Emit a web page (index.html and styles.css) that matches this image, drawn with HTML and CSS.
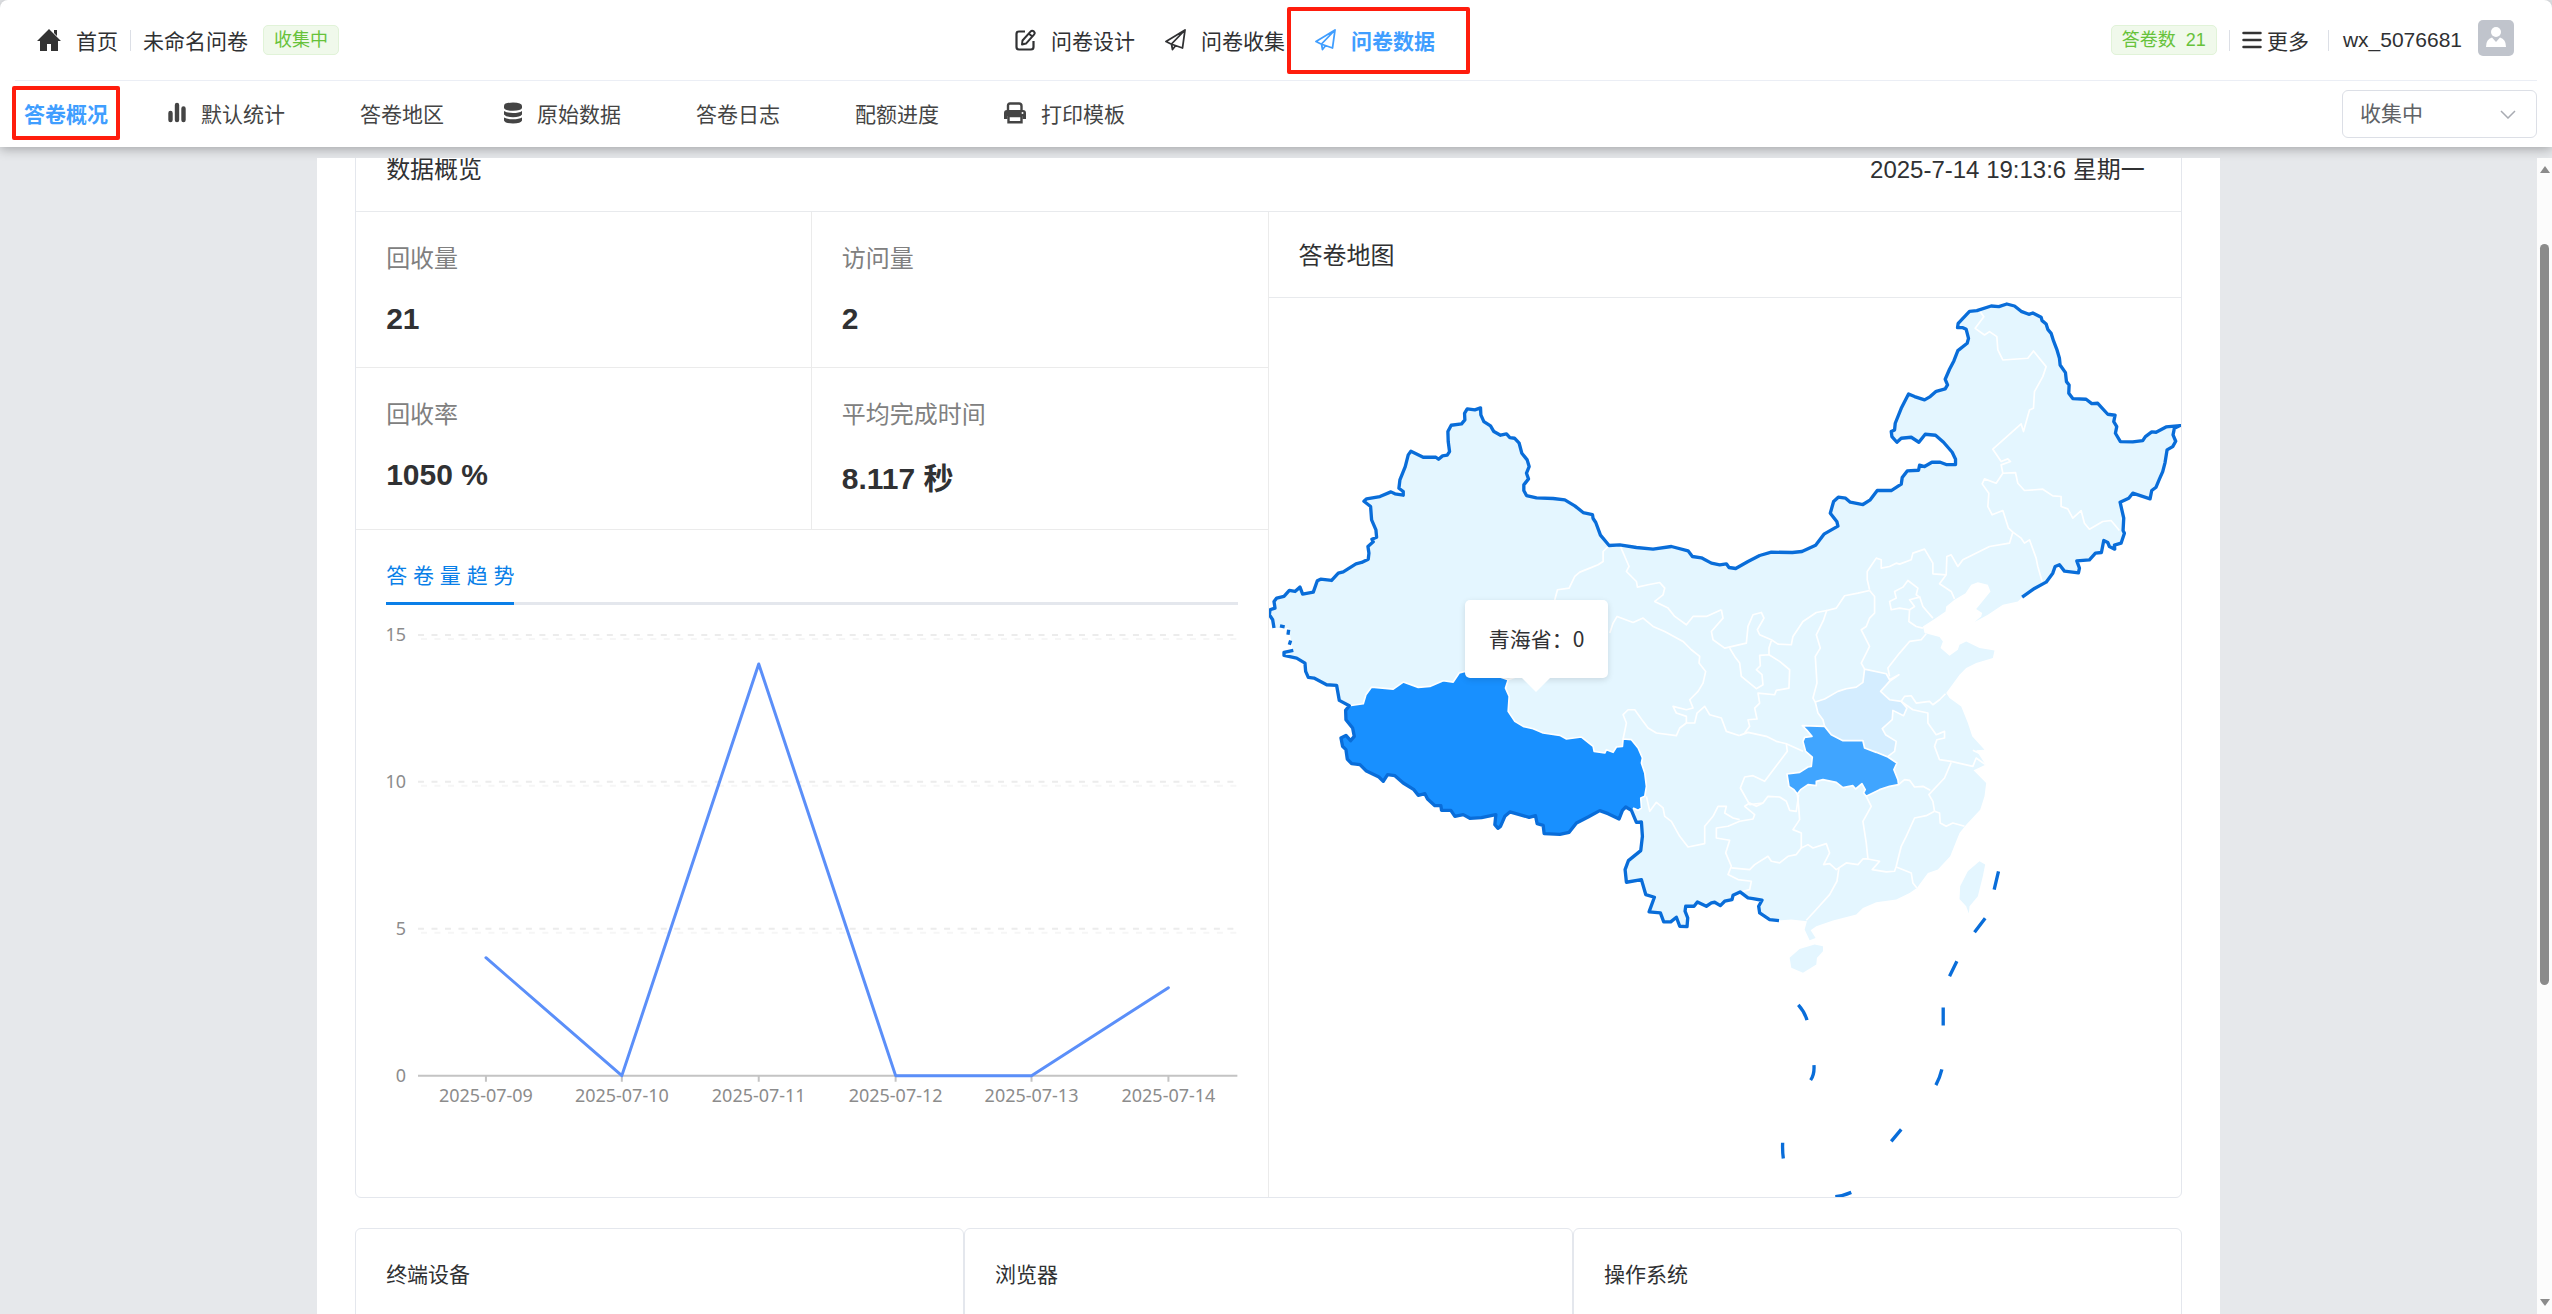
FILE: index.html
```
<!DOCTYPE html>
<html lang="zh-CN">
<head>
    <meta charset="UTF-8">
    <meta name="viewport" content="width=device-width, initial-scale=1.0">
    <title>问卷数据 - 答卷概况</title>
    <link rel="stylesheet" href="styles.css">
</head>
<body>
    <header class="header">
        <div class="top-bar">
            <div class="top-group">
                <a class="home-link" href="#">
                    <svg class="icon-home" viewBox="0 0 24 22"><path d="M12 0 L24 12 H21 V22 H14 V15 H10 V22 H3 V12 H0 Z M17 1 H20 V7 L17 4 Z" fill="#333"/></svg>
                    首页
                </a>
                <span class="divider"></span>
                <span class="survey-name">未命名问卷</span>
                <span class="tag">收集中</span>
            </div>
            <nav class="main-nav">
                <a class="nav-item" href="#">
                    <svg class="icon-nav" viewBox="0 0 21 22"><path d="M10 2.5 H4 Q1.5 2.5 1.5 5 V18 Q1.5 20.5 4 20.5 H16 Q18.500 20.500 18.500 18 V12" fill="none" stroke="currentColor" stroke-width="2.200"/><path d="M7.500 11.500 L15.500 2.600 Q17 1 18.800 2.400 Q20.500 4 19 5.700 L11 14.600 L7 15.500 Z M13.800 4.600 L17.200 7.600" fill="none" stroke="currentColor" stroke-width="2" stroke-linejoin="round"/></svg>
                    问卷设计
                </a>
                <a class="nav-item" href="#">
                    <svg class="icon-nav" viewBox="0 0 21 22"><path d="M20 1 L1 12.500 L6 15 L17.500 19 Z M20 1 L6.500 15 L7.500 20.500 L10.500 16.800" fill="none" stroke="currentColor" stroke-width="1.800" stroke-linejoin="round"/></svg>
                    问卷收集
                </a>
                <a class="nav-item active" href="#">
                    <svg class="icon-nav" viewBox="0 0 21 22"><path d="M20 1 L1 12.500 L6 15 L17.500 19 Z M20 1 L6.500 15 L7.500 20.500 L10.500 16.800" fill="none" stroke="currentColor" stroke-width="1.800" stroke-linejoin="round"/></svg>
                    问卷数据
                </a>
            </nav>
            <div class="top-group">
                <span class="tag tag-count">答卷数 <span>21</span></span>
                <span class="divider"></span>
                <button class="more-button" type="button">
                    <svg class="icon-more" viewBox="0 0 19 18"><path d="M1 2 H18 M1 9 H18 M1 16 H18" stroke="#333" stroke-width="2.500" stroke-linecap="round"/></svg>
                    更多
                </button>
                <span class="divider divider-user"></span>
                <span class="user-name">wx_5076681</span>
                <svg class="avatar" viewBox="0 0 36 36"><rect width="36" height="36" rx="5" fill="#c0c4cc"/><circle cx="18" cy="12" r="5" fill="#fff"/><path d="M8 27 Q8 19 14 17.500 L18 22 L22 17.500 Q28 19 28 27 Z" fill="#fff"/></svg>
            </div>
        </div>
        <div class="tab-bar">
            <nav class="tabs">
                <a class="tab active" href="#">答卷概况</a>
                <a class="tab tab-icon" href="#">
                    <svg class="icon-tab" viewBox="0 0 18 22"><path d="M2.500 11 V18 M9 3 V18 M15.500 6.500 V18" stroke="#444" stroke-width="4.400" stroke-linecap="round"/></svg>
                    默认统计
                </a>
                <a class="tab" href="#">答卷地区</a>
                <a class="tab tab-icon" href="#">
                    <svg class="icon-tab" viewBox="0 0 18 22"><path d="M0 4 Q0 0.500 9 0.500 Q18 0.500 18 4 V6 Q17 8.800 9 8.800 Q1 8.800 0 6 Z M0 9 Q3 11 9 11 Q15 11 18 9 V12.500 Q16 15.200 9 15.200 Q2 15.200 0 12.500 Z M0 15.500 Q3 17.300 9 17.300 Q15 17.300 18 15.500 V18.500 Q17 21.500 9 21.500 Q1 21.500 0 18.500 Z" fill="#444"/></svg>
                    原始数据
                </a>
                <a class="tab" href="#">答卷日志</a>
                <a class="tab" href="#">配额进度</a>
                <a class="tab tab-icon" href="#">
                    <svg class="icon-print" viewBox="0 0 27 22"><path d="M9 8 V3.500 Q9 1.500 11 1.500 H20 Q22.500 1.500 22.500 4 V8" fill="none" stroke="#444" stroke-width="2.400"/><path d="M8 8 H24 Q27 8 27 11 V17 H23.500 V14 H8.500 V17 H5 V11 Q5 8 8 8 Z" fill="#444"/><path d="M9.500 14 H22.500 V20.300 H9.500 Z" fill="#fff" stroke="#444" stroke-width="2.400"/><circle cx="23.500" cy="11" r="1" fill="#fff"/></svg>
                    打印模板
                </a>
            </nav>
            <div class="status-select">
                <select aria-label="问卷状态">
                    <option>收集中</option>
                </select>
                <svg class="icon-arrow" viewBox="0 0 16 9"><path d="M1 1 L8 8 L15 1" fill="none" stroke="#a8abb2" stroke-width="1.500"/></svg>
            </div>
        </div>
    </header>

    <div class="viewport">
        <div class="scroll-area">
            <main class="page">
                <section class="card overview">
                    <div class="card-title overview-title">
                        <span>数据概览</span>
                        <span>2025-7-14 19:13:6 星期一</span>
                    </div>
                    <div class="overview-body">
                        <div class="overview-left">
                            <div class="stats">
                                <div class="stat">
                                    <p class="stat-label">回收量</p>
                                    <p class="stat-value">21</p>
                                </div>
                                <div class="stat">
                                    <p class="stat-label">访问量</p>
                                    <p class="stat-value">2</p>
                                </div>
                                <div class="stat">
                                    <p class="stat-label">回收率</p>
                                    <p class="stat-value">1050 %</p>
                                </div>
                                <div class="stat">
                                    <p class="stat-label">平均完成时间</p>
                                    <p class="stat-value stat-time">8.117 秒</p>
                                </div>
                            </div>
                            <div class="trend">
                                <div class="trend-tabs"><button class="trend-tab" type="button">答 卷 量 趋 势</button></div>
                                <svg class="trend-chart" viewBox="386 605 852 520">
                                    <g class="grid-line">
                                        <path d="M418 635 H1238 M418 782 H1238 M418 929 H1238"/>
                                        <path class="grid-shadow" d="M421 639 H1238 M421 786 H1238 M421 933 H1238"/>
                                    </g>
                                    <path class="axis" d="M418 1076 H1238 M486 1076 V1082 M622 1076 V1082 M759 1076 V1082 M896 1076 V1082 M1032 1076 V1082 M1169 1076 V1082"/>
                                    <polyline class="trend-line" points="486,958 622,1076 759,664 896,1076 1032,1076 1169,988"/>
                                    <g class="axis-text" text-anchor="end">
                                        <text x="406" y="641">15</text>
                                        <text x="406" y="788">10</text>
                                        <text x="406" y="935">5</text>
                                        <text x="406" y="1082">0</text>
                                    </g>
                                    <g class="axis-text" text-anchor="middle">
                                        <text x="486" y="1102">2025-07-09</text>
                                        <text x="622" y="1102">2025-07-10</text>
                                        <text x="759" y="1102">2025-07-11</text>
                                        <text x="896" y="1102">2025-07-12</text>
                                        <text x="1032" y="1102">2025-07-13</text>
                                        <text x="1169" y="1102">2025-07-14</text>
                                    </g>
                                </svg>
                            </div>
                        </div>
                        <div class="overview-right">
                            <div class="card-title">答卷地图</div>
                            <div class="map">
                                <svg class="map-svg" viewBox="27 54 2739 2700">
                                    <!-- 底图 -->
                                    <path class="land" d="M42 1045 38 1020 28 1005 30 990 45 985 42 965 50 955 72 950 88 932 105 935 120 922 128 943 160 937 172 903 182 898 215 902 235 880 250 876 288 852 305 848 325 838 327 820 324 800 340 786 336 778 350 772 348 750 335 720 332 680 312 664 320 657 360 650 393 636 405 642 430 646 430 635 417 625 420 600 436 560 445 525 453 514 490 532 528 532 536 538 548 528 562 526 569 515 565 485 564 455 574 436 605 432 615 420 614 400 622 387 645 390 662 384 663 405 672 425 692 438 702 455 722 466 740 462 750 473 764 475 778 490 786 520 802 540 808 560 800 580 806 597 792 615 792 632 800 647 830 654 880 656 915 660 945 678 970 698 998 704 1000 716 1008 728 1022 766 1048 797 1080 795 1130 803 1180 808 1235 800 1285 813 1298 830 1325 834 1355 850 1380 855 1400 852 1408 863 1428 866 1465 845 1500 827 1535 817 1598 818 1627 815 1668 796 1693 763 1735 739 1732 726 1712 700 1722 665 1736 652 1758 655 1772 667 1810 674 1832 660 1853 632 1895 632 1925 613 1928 593 1943 573 1977 571 1980 556 1995 560 2017 547 2042 547 2060 554 2088 554 2088 538 2078 517 2052 487 2028 466 1997 463 1978 487 1955 472 1925 475 1912 487 1897 470 1895 455 1905 450 1907 430 1925 385 1947 342 1965 350 1995 360 2012 350 2030 334 2057 327 2064 315 2057 298 2070 268 2083 243 2095 212 2123 190 2127 175 2120 148 2110 143 2094 143 2096 130 2130 94 2152 92 2195 78 2218 80 2242 72 2265 78 2285 94 2308 103 2320 99 2345 112 2348 122 2360 132 2365 148 2375 160 2382 182 2392 208 2400 235 2402 255 2418 278 2421 305 2429 315 2428 340 2440 356 2480 358 2497 371 2515 370 2545 403 2567 406 2563 425 2572 440 2568 460 2583 485 2620 486 2650 482 2658 470 2677 456 2690 457 2720 441 2762 437 2745 445 2741 465 2749 484 2740 500 2723 510 2717 548 2710 575 2700 598 2690 622 2677 632 2672 657 2620 640 2608 655 2582 667 2593 715 2591 752 2595 760 2585 790 2565 796 2566 808 2550 800 2545 788 2533 782 2526 818 2508 820 2490 840 2452 843 2460 865 2457 879 2415 874 2400 855 2387 860 2380 880 2360 907 2325 926 2288 952
                                        2275 965 2230 975 2185 1005 2145 1027 2165 1010 2168 1000 2150 988 2165 970 2193 935 2185 915 2155 907 2135 915 2118 940 2085 960 2060 980 2058 995 2025 1018 1990 1040 1995 1060 2040 1072 2050 1085 2043 1105 2070 1128 2095 1110 2100 1095 2120 1085 2160 1105 2205 1112 2200 1135 2150 1150 2120 1165 2100 1185 2060 1240 2070 1255 2105 1280 2125 1330 2138 1370 2175 1410 2150 1412 2178 1455 2142 1472 2180 1510 2175 1550 2162 1590 2120 1635 2100 1660 2090 1685 2072 1730 2035 1770 2005 1780 1972 1825 1950 1840 1910 1860 1850 1868 1810 1885 1790 1905 1720 1923 1670 1940 1653 1952 1668 1975 1650 1982 1635 1950 1642 1925 1595 1920
                                        1555 1923 1530 1920 1500 1900 1497 1880 1507 1862 1480 1857 1465 1855 1441 1837 1420 1847 1417 1860 1395 1865 1382 1878 1365 1868 1355 1870 1340 1880 1313 1867 1303 1880 1278 1880 1276 1895 1284 1915 1282 1941 1260 1940 1250 1913 1233 1927 1212 1927 1202 1900 1168 1897 1184 1853 1158 1845 1145 1800 1100 1808 1096 1770 1106 1743 1143 1713 1148 1670 1145 1627 1130 1628 1115 1592 1098 1582 1088 1592 1078 1618 1045 1602 1020 1593 985 1612 950 1630 928 1658 900 1664 853 1662 850 1637 832 1632 827 1608 808 1613 750 1597 735 1610 722 1640 714 1646 705 1635 708 1605 665 1614 630 1616 610 1605 585 1610 573 1592 545 1592 543 1578 525 1578 503 1558 495 1542 475 1547 462 1530 430 1510 405 1488 383 1485 370 1505 357 1492 318 1473 300 1455 275 1452 262 1438 258 1410 248 1400 243 1375 258 1367 272 1383 283 1370 278 1345 258 1320 257 1292 268 1278 238 1262 230 1217 200 1215 162 1195 145 1193 137 1175 135 1150 110 1135 72 1127 72 1118 100 1112 92 1075 85 1045Z"/>
                                    <path class="land" d="M2160 1745 2177 1755 2170 1790 2155 1850 2130 1880 2128 1902 2120 1880 2100 1858 2102 1820 2125 1775Z"/>
                                    <path class="land" d="M1620 2008 1665 1995 1690 2000 1690 2015 1672 2035 1670 2055 1630 2080 1595 2065 1590 2035Z"/>

                                    <!-- 西藏 -->
                                    <path fill="#1890ff" d="M268 1278 310 1272 318 1245 335 1222 400 1228 430 1207 475 1223 510 1220 550 1203 580 1207 598 1180 615 1175 700 1185 745 1200 737 1225 748 1250 745 1295 765 1325 790 1340 820 1347 850 1360 900 1367 920 1378 965 1372 1000 1400 1003 1415 1035 1420 1040 1410 1060 1418 1070 1402 1088 1400 1090 1378 1115 1380 1135 1405 1148 1435 1145 1450 1155 1480 1160 1520 1155 1550 1143 1555 1145 1585 1135 1592 1120 1585 1115 1592 1098 1582 1088 1592 1078 1618 1045 1602 1020 1593 985 1612 950 1630 928 1658 900 1664 853 1662 850 1637 832 1632 827 1608 808 1613 750 1597 735 1610 722 1640 714 1646 705 1635 708 1605 665 1614 630 1616 610 1605 585 1610 573 1592 545 1592 543 1578 525 1578 503 1558 495 1542 475 1547 462 1530 430 1510 405 1488 383 1485 370 1505 357 1492 318 1473 300 1455 275 1452 262 1438 258 1410 248 1400 243 1375 258 1367 272 1383 283 1370 278 1345 258 1320 257 1292Z"/>

                                    <!-- 河南、湖北 -->
                                    <g transform="translate(1320 840)">
                                        <path fill="#d4edff" d="M347 427 375 418 415 395 440 387 470 382 490 368 495 328 560 342 570 360 543 395 570 420 605 425 622 445 612 468 580 452 578 480 548 507 558 525 590 545 585 575 565 590 530 575 510 573 492 560 490 543 430 543 395 525 375 500 370 480 355 460Z"/>
                                        <path fill="#40a5ff" d="M308 498 375 500 395 525 430 543 490 543 495 565 530 578 565 592 592 610 583 630 595 660 597 675 570 680 540 690 500 710 492 700 497 690 487 672 468 688 460 678 430 684 410 668 370 660 350 665 350 678 325 675 303 690 293 703 283 690 268 680 262 643 300 638 325 622 335 620 338 592 318 575 310 545 315 533 337 530 322 512Z"/>
                                    </g>

                                    <!-- 省界 -->
                                    <g class="province">
                                        <path d="M268 1278 310 1272 318 1245 335 1222 400 1228 430 1207 475 1223 510 1220 550 1203 580 1207 598 1180 615 1175 700 1185 745 1200 737 1225 748 1250 745 1295 765 1325 790 1340 820 1347 850 1360 900 1367 920 1378 965 1372 1000 1400 1003 1415 1035 1420 1040 1410 1060 1418 1070 1402 1088 1400 1090 1378 1115 1380 1135 1405 1148 1435 1145 1450 1155 1480 1160 1520 1155 1550 1143 1555 1145 1585 1135 1592 1120 1585"/>
                                        <path d="M1048 797 1030 815 1030 845 1015 855 990 865 960 877 945 890 928 925 893 930 885 960 870 1000 800 1180 745 1200"/>
                                        <path d="M1080 795 1108 860 1100 875 1130 905 1133 922 1165 915 1200 908 1215 925 1210 945 1185 965 1225 985 1245 1010 1280 1035 1300 1010 1340 1010 1385 990"/>
                                        <path d="M1050 1060 1060 1030 1072 1010 1120 1028 1150 1015 1180 1040 1215 1055 1270 1085 1295 1110 1320 1130 1318 1150 1338 1175 1330 1210 1315 1235 1290 1260 1300 1285 1280 1290 1240 1280 1250 1300 1280 1310 1280 1330 1305 1330 1312 1300 1335 1280 1350 1305 1385 1315 1400 1355 1440 1368"/>
                                        <path d="M1280 1330 1260 1345 1250 1368 1190 1360 1165 1345 1150 1325 1125 1290 1105 1290 1090 1305 1100 1330 1090 1378"/>
                                        <path d="M1160 1550 1170 1595 1190 1568 1210 1585 1215 1610 1235 1625 1260 1670 1285 1702 1335 1692 1335 1640 1360 1610"/>
                                    </g>
                                    <g class="province" transform="translate(1320 840)">
                                        <path d="M382 150 372 180 350 225 362 265 347 290 352 370 340 415 347 427 375 418 415 395 440 387 470 382 490 368 495 328"/>
                                        <path d="M65 150 70 175 35 215 40 240 75 265 140 250 145 200 160 165 185 158 193 175 173 210 180 225 215 240 235 253 275 255 280 230 310 185 350 158 382 152 410 145 435 108 475 100 510 92"/>
                                        <path d="M90 265 105 290 120 310 125 350 170 387 190 375 187 345 170 330 182 318 180 287 208 285 240 305 270 330 268 385 230 392 225 405 175 400 180 430 165 445 172 478 145 480 150 500 135 520"/>
                                        <path d="M215 243 208 265 208 285"/>
                                        <path d="M120 527 145 518 200 530 230 545 260 552 310 575"/>
                                        <path d="M260 552 263 575 225 625 195 665 160 648 135 652 122 685 150 735 190 730 205 710 240 712 260 725 270 752 290 755 297 705"/>
                                        <path d="M190 730 170 740 150 730 135 740 165 765 160 778 120 785 85 800 50 805 50 835 90 842 78 880 95 920 85 945 115 960 155 965 150 990 120 998"/>
                                        <path d="M40 770 55 740 80 740 75 760 100 775 120 780"/>
                                        <path d="M95 925 150 930 165 915 205 890 215 905 240 910 265 890 290 885 305 865"/>
                                        <path d="M293 703 297 740 300 780 280 810 305 820 305 865 325 855 340 865 380 852 390 880 372 915 390 912 410 930 440 910 475 915 490 898 505 898"/>
                                        <path d="M418 925 412 965 390 1005 345 1055 320 1082"/>
                                        <path d="M500 710 515 740 490 785 500 850 505 898 540 905 518 930 560 937 585 935 590 920 605 860 620 830 645 775 680 768 705 755"/>
                                        <path d="M590 922 635 940 640 970 652 985"/>
                                        <path d="M705 755 700 725 688 705 735 655 755 608"/>
                                        <path d="M705 755 720 760 722 790 740 800 760 790 795 800"/>
                                        <path d="M597 675 615 660 630 662 645 682 670 680 692 692"/>
                                        <path d="M605 425 640 450 685 460 685 490 710 525 735 515 735 535 712 540 705 560 720 600 755 605 820 620 830 595 858 615"/>
                                        <path d="M820 572 858 590"/>
                                        <path d="M605 425 615 410 635 408 650 430 690 425 700 435 720 420 738 402"/>
                                        <path d="M570 350 565 325 600 280 630 245 665 240 680 222"/>
                                        <path d="M510 92 525 110 525 160 510 175 500 200 485 210 510 260 485 310 495 328 560 342 570 360 598 345 570 365 543 395 570 420 605 425 622 445 612 468 580 452 578 480 548 507 558 525 590 545 585 575 565 590"/>
                                        <path d="M308 498 375 500 395 525 430 543 490 543 495 565 530 578 565 592 592 610 583 630 595 660 597 675 570 680 540 690 500 710 492 700 497 690 487 672 468 688 460 678 430 684 410 668 370 660 350 665 350 678 325 675 303 690 293 703 283 690 268 680 262 643 300 638 325 622 335 620 338 592 318 575 310 545 315 533 337 530 322 512Z"/>
                                        <path d="M347 427 355 460 370 480 375 500"/>
                                        <path d="M625 62 655 85 650 105 660 112 630 120 645 140 630 150 600 145 575 150 570 125 590 115 585 95 610 82Z"/>
                                        <path d="M660 110 670 140 700 175"/>
                                        <path d="M630 150 628 185 650 200 670 205"/>
                                    </g>
                                    <g class="province" transform="translate(1380 0)">
                                        <path d="M450 930 443 900 443 875 470 835 485 840 485 865 510 860 530 850 540 853 575 840 580 820 615 808 640 850 640 882 680 885 660 912 695 935 705 957"/>
                                        <path d="M680 885 682 830 695 825 715 860 730 840 810 800 870 790 880 757 905 775 915 790 930 780 950 835 955 860 968 905"/>
                                        <path d="M880 757 867 745 850 692 818 705 805 680 808 640 788 612 795 597 830 610 850 580 888 578 895 610 915 632 970 628 1000 648 1025 650 1025 680 1045 687 1060 715 1085 692 1095 730 1110 748 1150 725 1175 722 1200 752"/>
                                        <path d="M850 580 845 555 873 545 865 537 845 545 820 508 905 432 912 455 930 390 942 385 945 335 970 290 980 260 942 213 925 235 850 240 835 210 832 170 810 155 795 165 767 145 793 110 780 92"/>
                                    </g>

                                    <!-- 国界 -->
                                    <path class="border" d="M42 1045 38 1020 28 1005 30 990 45 985 42 965 50 955 72 950 88 932 105 935 120 922 128 943 160 937 172 903 182 898 215 902 235 880 250 876 288 852 305 848 325 838 327 820 324 800 340 786 336 778 350 772 348 750 335 720 332 680 312 664 320 657 360 650 393 636 405 642 430 646 430 635 417 625 420 600 436 560 445 525 453 514 490 532 528 532 536 538 548 528 562 526 569 515 565 485 564 455 574 436 605 432 615 420 614 400 622 387 645 390 662 384 663 405 672 425 692 438 702 455 722 466 740 462 750 473 764 475 778 490 786 520 802 540 808 560 800 580 806 597 792 615 792 632 800 647 830 654 880 656 915 660 945 678 970 698 998 704 1000 716 1008 728 1022 766 1048 797 1080 795 1130 803 1180 808 1235 800 1285 813 1298 830 1325 834 1355 850 1380 855 1400 852 1408 863 1428 866 1465 845 1500 827 1535 817 1598 818 1627 815 1668 796 1693 763 1735 739 1732 726 1712 700 1722 665 1736 652 1758 655 1772 667 1810 674 1832 660 1853 632 1895 632 1925 613 1928 593 1943 573 1977 571 1980 556 1995 560 2017 547 2042 547 2060 554 2088 554 2088 538 2078 517 2052 487 2028 466 1997 463 1978 487 1955 472 1925 475 1912 487 1897 470 1895 455 1905 450 1907 430 1925 385 1947 342 1965 350 1995 360 2012 350 2030 334 2057 327 2064 315 2057 298 2070 268 2083 243 2095 212 2123 190 2127 175 2120 148 2110 143 2094 143 2096 130 2130 94 2152 92 2195 78 2218 80 2242 72 2265 78 2285 94 2308 103 2320 99 2345 112 2348 122 2360 132 2365 148 2375 160 2382 182 2392 208 2400 235 2402 255 2418 278 2421 305 2429 315 2428 340 2440 356 2480 358 2497 371 2515 370 2545 403 2567 406 2563 425 2572 440 2568 460 2583 485 2620 486 2650 482 2658 470 2677 456 2690 457 2720 441 2762 437 2745 445 2741 465 2749 484 2740 500 2723 510 2717 548 2710 575 2700 598 2690 622 2677 632 2672 657 2620 640 2608 655 2582 667 2593 715 2591 752 2595 760 2585 790 2565 796 2566 808 2550 800 2545 788 2533 782 2526 818 2508 820 2490 840 2452 843 2460 865 2457 879 2415 874 2400 855 2387 860 2380 880 2360 907 2325 926 2288 952"/>
                                    <path class="border" d="M1558 1923 1530 1920 1500 1900 1497 1880 1507 1862 1480 1857 1465 1855 1441 1837 1420 1847 1417 1860 1395 1865 1382 1878 1365 1868 1355 1870 1340 1880 1313 1867 1303 1880 1278 1880 1276 1895 1284 1915 1282 1941 1260 1940 1250 1913 1233 1927 1212 1927 1202 1900 1168 1897 1184 1853 1158 1845 1145 1800 1100 1808 1096 1770 1106 1743 1143 1713 1148 1670 1145 1627 1130 1628 1115 1592 1098 1582 1088 1592 1078 1618 1045 1602 1020 1593 985 1612 950 1630 928 1658 900 1664 853 1662 850 1637 832 1632 827 1608 808 1613 750 1597 735 1610 722 1640 714 1646 705 1635 708 1605 665 1614 630 1616 610 1605 585 1610 573 1592 545 1592 543 1578 525 1578 503 1558 495 1542 475 1547 462 1530 430 1510 405 1488 383 1485 370 1505 357 1492 318 1473 300 1455 275 1452 262 1438 258 1410 248 1400 243 1375 258 1367 272 1383 283 1370 278 1345 258 1320 257 1292 268 1278 238 1262 230 1217 200 1215 162 1195 145 1193 137 1175 135 1150 110 1135 72 1127 72 1118 100 1112"/>
                                    <path class="border" d="M88 1095 92 1082 M84 1065 86 1050 M60 1038 74 1041"/>
                                    <g class="border" transform="translate(900 1500)">
                                        <path d="M1317 275 1304 330 M1277 416 1245 458 M1192 545 1170 590 M1151 684V738 M1147 870Q1141 895 1129 917 M1025 1050 995 1086 M716 676Q735 697 742 722 M763 857Q765 885 753 902 M669 1090Q668 1115 671 1137 M875 1239Q850 1250 827 1252"/>
                                    </g>
                                </svg>
                                <div class="map-tooltip">青海省：0</div>
                            </div>
                        </div>
                    </div>
                </section>

                <div class="card-row">
                    <section class="card small-card">终端设备</section>
                    <section class="card small-card">浏览器</section>
                    <section class="card small-card">操作系统</section>
                </div>
            </main>
        </div>
        <div class="scrollbar">
            <span class="scroll-arrow scroll-up"></span>
            <span class="scroll-thumb"></span>
            <span class="scroll-arrow scroll-down"></span>
        </div>
    </div>
</body>
</html>
```
FILE: styles.css
```
* {
    margin: 0;
    padding: 0;
    box-sizing: border-box;
}
body {
    display: flex;
    flex-direction: column;
    height: 100vh;
    overflow: hidden;
    background: #e6e8eb;
    color: #303133;
    font-family: "Liberation Sans", "Noto Sans CJK SC", sans-serif;
    font-size: 21px;
}
a {
    color: inherit;
    text-decoration: none;
}
button, select {
    border: none;
    background: none;
    color: inherit;
    font: inherit;
    cursor: pointer;
}
svg {
    display: block;
    flex: none;
}

/* 顶部 */
.header {
    flex: none;
    padding: 0 15px;
    background: #fff;
    border-radius: 8px 8px 0 0;
    box-shadow: 0 2px 12px rgba(0, 0, 0, 0.3);
}
.top-bar {
    display: flex;
    align-items: center;
    justify-content: space-between;
    height: 81px;
    padding: 0 23px 0 22px;
    border-bottom: 1px solid #ebeef5;
}
.top-group, .main-nav, .home-link, .nav-item, .more-button, .tabs, .tab {
    display: flex;
    align-items: center;
}
.home-link {
    gap: 15px;
}
.icon-home {
    width: 24px;
    height: 22px;
}
.divider {
    width: 1px;
    height: 21px;
    margin: 0 12px;
    background: #dcdfe6;
}
.tag {
    height: 30px;
    margin-left: 15px;
    padding: 0 10px;
    background: #f0f9eb;
    border: 1px solid #e1f3d8;
    border-radius: 5px;
    color: #67c23a;
    font-size: 18px;
    line-height: 28px;
}
.tag-count {
    margin-left: 0;
}
.tag-count span {
    margin-left: 5px;
}
.main-nav {
    gap: 30px;
}
.nav-item {
    position: relative;
    gap: 15px;
}
.icon-nav {
    width: 21px;
    height: 22px;
}
.nav-item.active, .tab.active {
    color: #409eff;
    font-weight: bold;
}
.nav-item.active::after, .tab.active::after {
    content: "";
    position: absolute;
    border: 4px solid #ff1d0d;
    border-radius: 2px;
}
.nav-item.active::after {
    inset: -18px -35px -19px -28px;
}
.more-button {
    gap: 5px;
}
.icon-more {
    width: 20px;
    height: 18px;
}
.divider-user {
    margin: 0 14px 0 19px;
}
.avatar {
    width: 36px;
    height: 36px;
    margin-bottom: 4px;
    margin-left: 16px;
}
.tab-bar {
    display: flex;
    align-items: center;
    justify-content: space-between;
    height: 66px;
    padding-left: 9px;
    color: #444;
}
.tabs {
    gap: 75px;
    padding-bottom: 3px;
}
.tab {
    position: relative;
    gap: 15px;
}
.tab-icon {
    margin-left: -15px;
}
.tab.active::after {
    inset: -12px;
}
.icon-tab {
    width: 18px;
    height: 22px;
}
.icon-print {
    width: 27px;
    height: 22px;
}
.status-select {
    position: relative;
    width: 195px;
}
.status-select select {
    width: 100%;
    height: 48px;
    padding: 0 17px 2px;
    border: 1px solid #dcdfe6;
    border-radius: 6px;
    color: #606266;
    appearance: none;
}
.icon-arrow {
    position: absolute;
    top: 20px;
    right: 21px;
    width: 16px;
    height: 9px;
}

/* 滚动区域 */
.viewport {
    display: flex;
    flex: 1;
    margin-top: 11px;
    min-height: 0;
    overflow: hidden;
}
.scroll-area {
    flex: 1;
}
.page {
    width: 75%;
    margin: 0 auto;
    padding: 0 38px;
    background: #fff;
    /* 只占一屏，标题行滚出顶部 */
    display: flow-root;
}
.card {
    border: 1px solid #e4e7ed;
    border-radius: 6px;
}
.overview {
    margin-top: -33px;
    overflow: hidden;
}
.card-title {
    height: 86px;
    padding: 0 30px;
    border-bottom: 1px solid #e8eaed;
    font-size: 24px;
    line-height: 87px;
}
.overview-title {
    display: flex;
    justify-content: space-between;
    padding-right: 36px;
}
.overview-body {
    display: grid;
    grid-template-columns: 1fr 1fr;
}
.overview-left {
    border-right: 1px solid #ebebeb;
}
.stats {
    display: grid;
    grid-template-columns: 1fr 1fr;
    grid-template-rows: 156px 162px;
}
.stat {
    padding: 29px 30px 0;
    border-bottom: 1px solid #ebebeb;
}
.stat:nth-child(odd) {
    border-right: 1px solid #ebebeb;
}
.stat-label {
    margin-bottom: 24px;
    color: #808080;
    font-size: 24px;
    line-height: 36px;
}
.stat-value {
    font-size: 30px;
    font-weight: bold;
    line-height: 36px;
}
.stat-time {
    line-height: 44px;
}
.trend {
    padding: 29px 30px 0;
}
.trend-tabs {
    display: flex;
    height: 46px;
    border-bottom: 3px solid #e4e7ed;
}
.trend-tab {
    height: 46px;
    padding-bottom: 9px;
    border-bottom: 3px solid #0a7fe8;
    color: #0a7fe8;
    line-height: 34px;
}
.trend-chart {
    width: 100%;
}
.grid-line {
    fill: none;
    stroke: #ececec;
    stroke-width: 2;
    stroke-dasharray: 6 7.5;
}
.grid-shadow {
    stroke: #f6f6f6;
}
.axis {
    fill: none;
    stroke: #c4c4c4;
    stroke-width: 2;
}
.trend-line {
    fill: none;
    stroke: #5b8ff9;
    stroke-width: 3;
    stroke-linejoin: round;
    stroke-linecap: round;
}
.axis-text {
    fill: #8c8c8c;
    font-family: "Noto Sans", sans-serif;
    font-size: 18px;
}

/* 地图 */
.map {
    position: relative;
}
.map-svg {
    width: 100%;
}
.land {
    fill: #e4f6ff;
}
.province {
    fill: none;
    stroke: #fff;
    stroke-width: 5;
    stroke-linejoin: round;
}
.border {
    fill: none;
    stroke: #096dd9;
    stroke-width: 10;
    stroke-linejoin: round;
}
.map-tooltip {
    position: absolute;
    top: 33.6%;
    left: 21.5%;
    height: 78px;
    padding: 0 24px;
    background: #fff;
    border-radius: 5px;
    box-shadow: 0 2px 6px rgba(0, 0, 0, 0.12);
    font-family: "Noto Sans CJK SC", sans-serif;
    line-height: 76px;
    white-space: nowrap;
}
.map-tooltip::after {
    content: "";
    position: absolute;
    top: 100%;
    left: 50%;
    margin-left: -14px;
    border: 14px solid transparent;
    border-top-color: #fff;
    border-bottom: none;
}
.card-row {
    display: grid;
    grid-template-columns: repeat(3, 1fr);
    margin-top: 30px;
}
.small-card {
    height: 300px;
    padding: 28px 30px;
    line-height: 36px;
}

.scrollbar {
    display: flex;
    flex-direction: column;
    align-items: center;
    width: 15px;
    padding: 8px 0;
    background: #fcfcfc;
}
.scroll-arrow {
    border: 5px solid transparent;
}
.scroll-up {
    border-top: none;
    border-bottom: 7px solid #8b8b8b;
}
.scroll-down {
    margin-top: auto;
    border-bottom: none;
    border-top: 7px solid #8b8b8b;
}
.scroll-thumb {
    width: 9px;
    height: 741px;
    margin-top: 71px;
    background: #8b8b8b;
    border-radius: 5px;
}
```
